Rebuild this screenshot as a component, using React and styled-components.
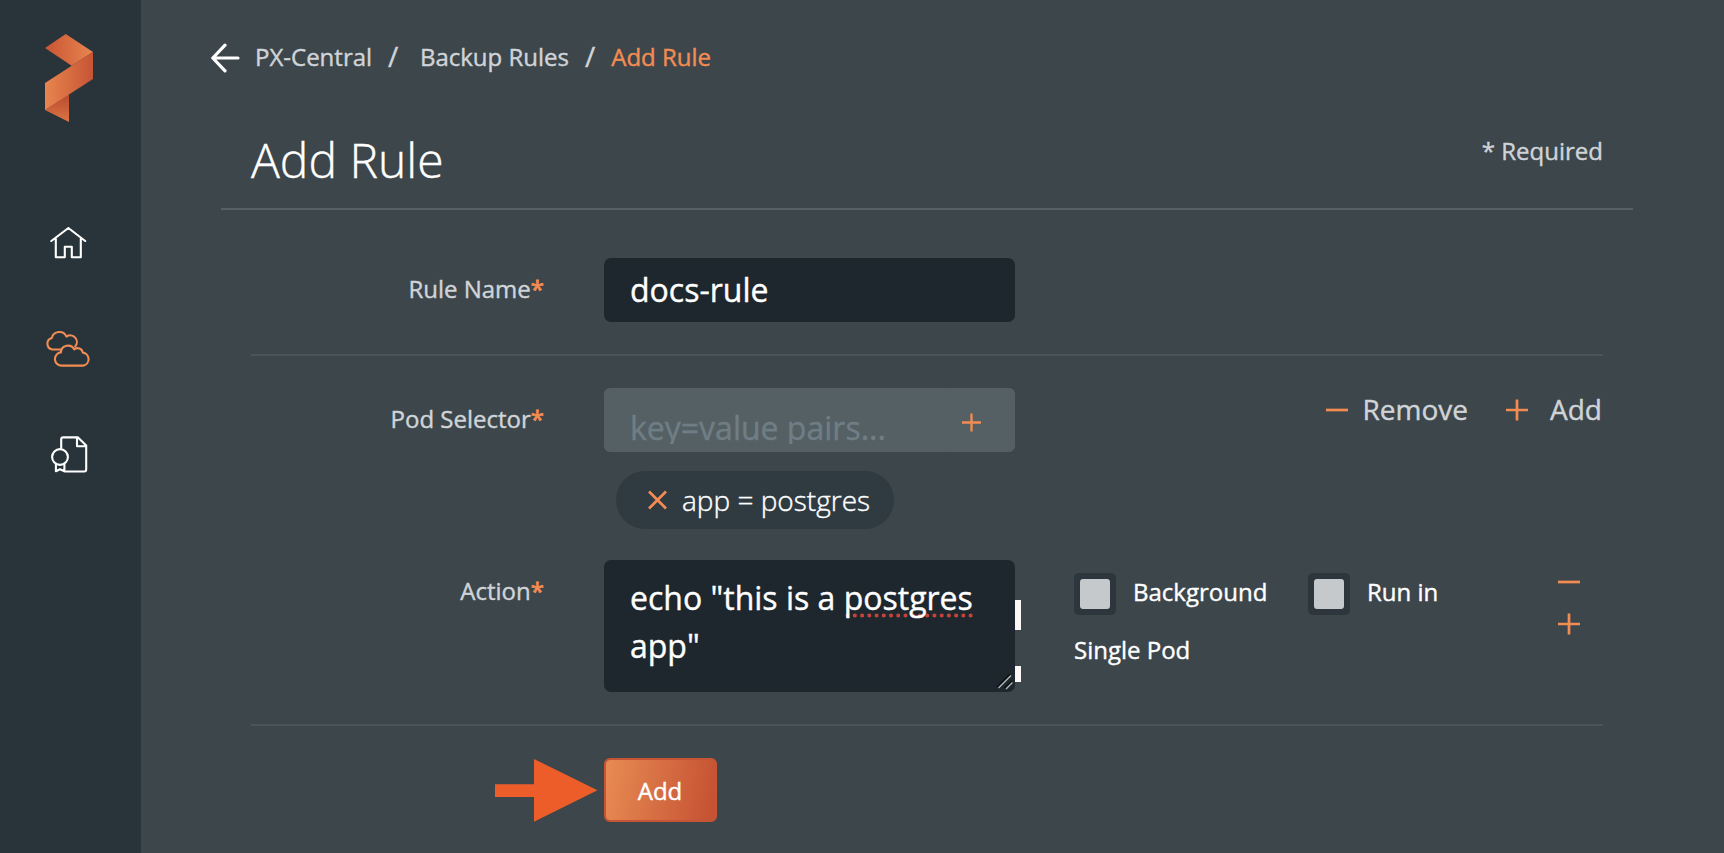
import React from "react";
import styled, { createGlobalStyle } from "styled-components";

const GlobalStyle = createGlobalStyle`
  *, *::before, *::after { box-sizing: border-box; }
  body {
    margin: 0;
    background: #3c464b;
    color: #fff;
    font-family: "Open Sans", "Noto Sans", sans-serif;
    font-size: 24px;
    overflow: hidden;
    -webkit-text-stroke: 0.4px currentColor;
  }
`;

const ORANGE = "#f38c52";
const MUTED = "#d0d4d8";

const Shell = styled.div`
  display: flex;
  height: 853px;
`;

const Sidebar = styled.nav`
  flex: none;
  width: 141px;
  padding: 34px 0 0 45px;
  background: #28343a;
  display: flex;
  flex-direction: column;
`;

const Logo = styled.svg`
  display: block;
  width: 48px;
  height: 88px;
  margin-bottom: 97px;
`;

const NavIcon = styled.svg`
  display: block;
  width: 48px;
  height: 48px;
  margin-bottom: 58px;
  fill: none;
  stroke: ${(p) => (p.$active ? ORANGE : "#fff")};
  stroke-width: 2.1;
  stroke-linejoin: round;
  stroke-linecap: round;
`;

const Main = styled.main`
  flex: 1;
  padding: 36px 91px 0 70px;
`;

const Breadcrumb = styled.div`
  display: flex;
  align-items: center;
  height: 41px;
  line-height: 41px;
  color: ${MUTED};
  white-space: pre;
`;

const BackArrow = styled.svg`
  width: 29px;
  height: 30px;
  margin: 3px 15px 0 0;
  fill: none;
  stroke: #fff;
  stroke-width: 3.2;
  stroke-linecap: round;
  stroke-linejoin: round;
`;

const Slash = styled.span`
  font-size: 28px;
  margin: 0 ${(p) => p.$after}px 0 16px;
`;

const Current = styled.span`
  color: ${ORANGE};
`;

const Panel = styled.section`
  margin-left: 10px;
`;

const PanelHeader = styled.header`
  display: flex;
  justify-content: space-between;
  height: 133px;
  padding: 49px 30px 0;
  border-bottom: 2px solid #566066;
`;

const Title = styled.h1`
  margin: 0;
  font-size: 48px;
  font-weight: 300;
  line-height: 67px;
`;

const Required = styled.div`
  line-height: 50px;
  color: ${MUTED};
`;

const Form = styled.div`
  padding: 0 30px;
`;

const Group = styled.div`
  padding: ${(p) => p.$top}px 0 32px;
  border-bottom: 2px solid #4a5459;
`;

const Row = styled.div`
  display: flex;
  align-items: flex-start;
`;

const Label = styled.label`
  flex: none;
  width: 293px;
  margin-right: 60px;
  text-align: right;
  line-height: 61px;
  color: ${MUTED};

  &::after {
    content: "*";
    color: ${ORANGE};
    -webkit-text-stroke: 0.8px ${ORANGE};
  }
`;

const Field = styled.div`
  flex: none;
  width: 411px;
`;

const TextInput = styled.input`
  display: block;
  width: 100%;
  height: 64px;
  padding: 0 26px 2px;
  border: 0;
  border-radius: 7px;
  outline: 0;
  background: #1d272d;
  color: #fff;
  font: inherit;
  font-size: 32px;
`;

const PairInput = styled.div`
  display: flex;
  height: 64px;
`;

const PairText = styled.div`
  flex: 1;
  height: 64px;
  padding: 20px 0 8px 26px;
  border-radius: 6px 1px 1px 6px;
  background: #556065;
  color: #6f7e85;
  font-size: 32px;
  line-height: 40px;
`;

const PairClip = styled.div`
  height: 36px;
  overflow: hidden;
`;

const PairButton = styled.button`
  width: 66px;
  height: 64px;
  padding: 4px 0 0 13px;
  border: 0;
  border-radius: 1px 6px 6px 1px;
  background: #556065;
  display: flex;
  align-items: center;
`;

const Glyph = styled.svg`
  flex: none;
  display: block;
  width: ${(p) => p.$size || 22}px;
  height: ${(p) => p.$size || 22}px;
  fill: none;
  stroke: ${ORANGE};
  stroke-width: 2.7;
`;

const Chip = styled.div`
  display: flex;
  align-items: center;
  width: 278px;
  height: 58px;
  margin: 19px 0 31px 12px;
  padding-left: 31px;
  border-radius: 29px;
  background: #303b41;
  font-size: 28px;
  font-weight: 300;
  white-space: nowrap;
`;

const ChipText = styled.span`
  margin-left: 13px;
`;

const Script = styled.div`
  position: relative;
  height: 132px;
  padding: 13.5px 26px;
  border-radius: 7px;
  background: #1d272d;
  font-size: 32px;
  line-height: 48px;
`;

const Misspelled = styled.span`
  background: radial-gradient(circle, #c4443b 1.7px, transparent 2.3px) 0 37.5px / 7.24px 5px repeat-x;
`;

const Grip = styled.svg`
  position: absolute;
  right: 2px;
  bottom: 2px;
  width: 16px;
  height: 16px;
  fill: none;
`;

const ScrollMark = styled.i`
  position: absolute;
  left: 411px;
  top: ${(p) => p.$top}px;
  width: 6px;
  height: ${(p) => p.$height}px;
  background: #fcf8f8;
`;

const GroupActions = styled.div`
  display: flex;
  align-items: center;
  margin-left: auto;
  height: 43px;
  color: ${MUTED};
  font-size: 28px;
`;

const ActionText = styled.span`
  position: relative;
  margin: 0 ${(p) => p.$after}px 2px ${(p) => p.$before}px;
`;

const Options = styled.div`
  margin: 2.5px 0 0 59px;
  width: 400px;
  line-height: 58px;
`;

const OptionLine = styled.div`
  display: flex;
  align-items: center;
  height: 58px;
  white-space: nowrap;
`;

const Checkbox = styled.span`
  flex: none;
  width: 42px;
  height: 42px;
  margin: 4px 17px 0 0;
  border: 6px solid #2c363c;
  border-radius: 5px;
  background: #2c363c;

  &::before {
    content: "";
    display: block;
    height: 30px;
    border-radius: 3px;
    background: #c5c9cc;
  }
`;

const OptionText = styled.span`
  width: ${(p) => p.$width}px;
`;

const Stepper = styled.div`
  display: flex;
  flex-direction: column;
  gap: 20px;
  margin: 10.5px 23px 0 auto;
`;

const Footer = styled.div`
  display: flex;
  padding-top: 32px;
`;

const Pointer = styled.svg`
  display: block;
  width: 103px;
  height: 64px;
  margin: 0 6px 0 244px;
`;

const Submit = styled.button`
  width: 113px;
  height: 64px;
  padding: 2px 1px 0 0;
  border: 2px solid #c65435;
  border-radius: 6px;
  background: linear-gradient(100deg, #e88b53, #c45032) padding-box, #c65435;
  color: #fff;
  font: inherit;
  line-height: 58px;
`;

const Minus = () => (
  <Glyph viewBox="0 0 22 22">
    <path d="M0 11H22" />
  </Glyph>
);

const Plus = ({ size }) => (
  <Glyph viewBox="0 0 22 22" $size={size}>
    <path d="M0 11H22M11 0.5V21.5" />
  </Glyph>
);

export default function App() {
  return (
    <>
      <GlobalStyle />
      <Shell>
        <Sidebar>
          <Logo viewBox="0 0 48 88">
            <defs>
              <linearGradient id="fold-top" x1="0" x2="1">
                <stop offset="0" stopColor="#c95434" />
                <stop offset="1" stopColor="#e8864f" />
              </linearGradient>
              <linearGradient id="fold-mid" x1="0" x2="1">
                <stop offset="0" stopColor="#e8854e" />
                <stop offset="1" stopColor="#c65435" />
              </linearGradient>
              <linearGradient id="fold-end" x1="0" y1="0" x2="0" y2="1">
                <stop offset="0" stopColor="#b9492f" />
                <stop offset="1" stopColor="#dc7544" />
              </linearGradient>
            </defs>
            <path d="M0 14L20.7 0L48 18L26.7 31.7Z" fill="url(#fold-top)" />
            <path d="M0 76L24 60V88Z" fill="url(#fold-end)" />
            <path d="M48 18V45L0 76V49Z" fill="url(#fold-mid)" />
          </Logo>
          <NavIcon viewBox="0 0 48 48">
            <path d="M6.3 22L23.4 9L40.2 22M10.8 19.5V38.2H19.8V27.8H26.8V38.2H35.8V19.5" />
          </NavIcon>
          <NavIcon viewBox="0 0 48 48" $active>
            <path d="M16 24.5H7.2A5.9 5.9 0 0 1 6.8 13A7.8 7.8 0 0 1 21.5 11.6A6.6 6.6 0 0 1 30.2 21.4" />
            <path d="M17.2 40.6A6.5 6.5 0 0 1 15.9 27.4A7.1 7.1 0 0 1 29.2 24.3A5.4 5.4 0 0 1 37.8 27.6A6.6 6.6 0 0 1 38.4 40.6Z" />
          </NavIcon>
          <NavIcon viewBox="0 0 48 48">
            <path d="M16.2 17V8.4Q16.2 6.4 18.2 6.4H33L41.2 14.5V38.5Q41.2 40.5 39.2 40.5H20.5M32 7V15.3H41" />
            <circle cx="15" cy="26" r="7.9" />
            <path d="M10.9 33V40.3L15 38.2L19.4 40.3V33" />
          </NavIcon>
        </Sidebar>
        <Main>
          <Breadcrumb>
            <BackArrow viewBox="0 0 29 30">
              <path d="M27 15H1.8M14 2.2L1.8 15L14 27.8" />
            </BackArrow>
            <span>PX-Central</span>
            <Slash $after={21.5}>/</Slash>
            <span>Backup Rules</span>
            <Slash $after={16}>/</Slash>
            <Current>Add Rule</Current>
          </Breadcrumb>
          <Panel>
            <PanelHeader>
              <Title>Add Rule</Title>
              <Required>* Required</Required>
            </PanelHeader>
            <Form>
              <Group $top={48}>
                <Row>
                  <Label>Rule Name</Label>
                  <Field>
                    <TextInput defaultValue="docs-rule" />
                  </Field>
                </Row>
              </Group>
              <Group $top={32}>
                <Row>
                  <Label>Pod Selector</Label>
                  <Field>
                    <PairInput>
                      <PairText>
                        <PairClip>key=value pairs...</PairClip>
                      </PairText>
                      <PairButton>
                        <Plus size={19} />
                      </PairButton>
                    </PairInput>
                    <Chip>
                      <Glyph viewBox="0 0 22 22">
                        <path d="M2 2.5L19 19.5M19 2.5L2 19.5" />
                      </Glyph>
                      <ChipText>app = postgres</ChipText>
                    </Chip>
                  </Field>
                  <GroupActions>
                    <Minus />
                    <ActionText $before={15} $after={38}>Remove</ActionText>
                    <Plus />
                    <ActionText $before={22} $after={1}>Add</ActionText>
                  </GroupActions>
                </Row>
                <Row>
                  <Label>Action</Label>
                  <Field>
                    <Script>
                      echo "this is a <Misspelled>postgres</Misspelled> app"
                      <Grip viewBox="0 0 16 16">
                        <path d="M0 13L13 0M7.5 14L15 7" stroke="#0c1114" strokeWidth="1.5" />
                        <path d="M1.5 14L14 1.5M9 15L15.5 8.5" stroke="#b4b8ba" strokeWidth="1.3" />
                      </Grip>
                      <ScrollMark $top={40} $height={30} />
                      <ScrollMark $top={106} $height={16} />
                    </Script>
                  </Field>
                  <Options>
                    <OptionLine>
                      <Checkbox />
                      <OptionText $width={175}>Background</OptionText>
                      <Checkbox />
                      <OptionText $width={80}>Run in</OptionText>
                    </OptionLine>
                    <OptionLine>Single Pod</OptionLine>
                  </Options>
                  <Stepper>
                    <Minus />
                    <Plus />
                  </Stepper>
                </Row>
              </Group>
              <Footer>
                <Pointer viewBox="0 0 103 64">
                  <path d="M0 26.3H39V1L102.5 32.3L39 63.7V39H0Z" fill="#ed5d2a" />
                </Pointer>
                <Submit>Add</Submit>
              </Footer>
            </Form>
          </Panel>
        </Main>
      </Shell>
    </>
  );
}
